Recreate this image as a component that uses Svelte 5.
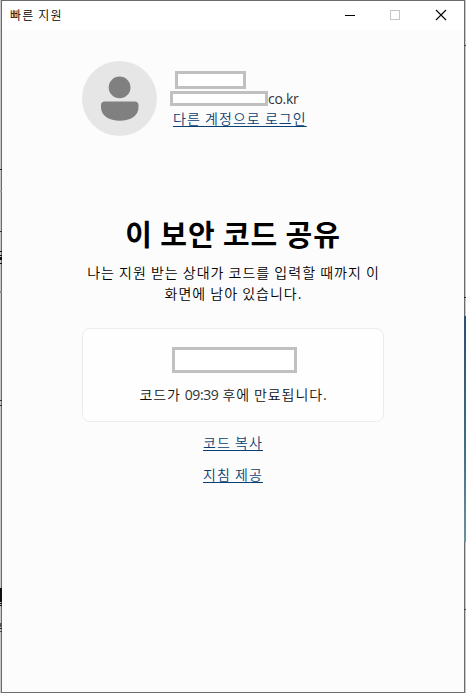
<script>
  const edgeMarks = [
    { top: 169, h: 1, c: '#222' }, { top: 191, h: 1, c: '#999' }, { top: 231, h: 1, c: '#333' },
    { top: 251, h: 1, c: '#111' }, { top: 255, h: 1, c: '#111' }, { top: 257, h: 2, c: '#111' },
    { top: 259, h: 1, c: '#111' }, { top: 263, h: 1, c: '#111' }, { top: 291, h: 2, c: '#888' },
    { top: 400, h: 1, c: '#333' }, { top: 405, h: 1, c: '#333' }, { top: 588, h: 14, c: '#111' },
    { top: 603, h: 1, c: '#111' }, { top: 605, h: 1, c: '#111' }, { top: 623, h: 4, c: '#555' },
    { top: 628, h: 1, c: '#222' }, { top: 631, h: 1, c: '#444' }
  ];
  const rightMarks = [
    { top: 45, h: 1, c: '#444' }, { top: 297, h: 1, c: '#222' }, { top: 609, h: 1, c: '#444' }
  ];
</script>

<div class="desktop">
  {#each edgeMarks as m}
    <i class="mark left" style="top:{m.top}px;height:{m.h}px;background:{m.c}"></i>
  {/each}
  {#each rightMarks as m}
    <i class="mark right" style="top:{m.top}px;height:{m.h}px;background:{m.c}"></i>
  {/each}
  <i class="panel"></i>
  <div class="window">
    <header>
      <span class="title">빠른 지원</span>
      <div class="controls">
        <svg width="46" height="29" viewBox="0 0 46 29" shape-rendering="crispEdges"><path d="M18 14.5h10" stroke="#000" /></svg>
        <svg width="45" height="29" viewBox="0 0 45 29" shape-rendering="crispEdges"><rect x="17.5" y="9.5" width="9" height="9" fill="none" stroke="#c6c6c6" /></svg>
        <svg width="46" height="29" viewBox="0 0 46 29"><path d="M18 9l10 10M28 9l-10 10" stroke="#000" stroke-width="1.1" /></svg>
      </div>
    </header>
    <main>
      <section class="account">
        <svg class="avatar" width="75" height="75" viewBox="0 0 75 75">
          <circle cx="37.5" cy="37.5" r="37.5" fill="#e6e6e6" />
          <circle cx="37.6" cy="26.4" r="10.9" fill="#808080" />
          <path d="M23 40.5h29.500a4 4 0 0 1 4 4v2c0 8-8 13.300-18.700 13.300S19 54.500 19 46.500v-2a4 4 0 0 1 4-4z" fill="#808080" />
        </svg>
        <div class="who">
          <div class="mask name"></div>
          <div class="mail"><div class="mask address"></div><span>co.kr</span></div>
          <a class="link login" href="#login">다른 계정으로 로그인</a>
        </div>
      </section>
      <h1>이 보안 코드 공유</h1>
      <p class="desc">나는 지원 받는 상대가 코드를 입력할 때까지 이<br />화면에 남아 있습니다.</p>
      <section class="card">
        <div class="mask code"></div>
        <p class="expires">코드가 <span>09:39</span> 후에 만료됩니다.</p>
      </section>
      <a class="link copy" href="#copy">코드 복사</a>
      <a class="link guide" href="#guide">지침 제공</a>
    </main>
  </div>
</div>

<style>
  :global(body) { margin: 0; overflow: hidden; }
  .desktop {
    position: relative; box-sizing: border-box; width: 466px; height: 693px; padding: 0 1px;
    background: #c8c8c8; font-family: "Noto Sans CJK KR", sans-serif; font-size: 14px;
  }
  .mark { position: absolute; width: 2px; z-index: 1; }
  .left { left: 0; }
  .right { right: 0; }
  .panel {
    position: absolute; z-index: 1; right: 0; top: 316px; width: 2px; height: 226px;
    background: linear-gradient(#2d4f72, #3f6c87 55%, #6a929b);
  }
  .window {
    box-sizing: border-box; width: 464px; height: 693px; border: 1px solid #6b6b6d;
    background: #fcfcfc; display: flex; flex-direction: column;
  }
  header { height: 29px; background: #fff; display: flex; justify-content: space-between; }
  .title { padding-left: 8px; font-size: 12px; line-height: 28px; letter-spacing: 1.2px; color: #000; font-weight: 350; }
  .controls { display: flex; }
  svg { display: block; flex: none; }
  main { display: flex; flex-direction: column; align-items: center; }
  .account { align-self: flex-start; display: flex; margin: 31px 0 0 80px; height: 75px; }
  .who { display: flex; flex-direction: column; align-items: flex-start; padding: 10px 0 0 13px; }
  .mask { box-sizing: border-box; border: 3px solid #c0c0c0; background: #fff; flex: none; }
  .name { width: 71px; height: 18px; margin-left: 5px; }
  .mail { display: flex; margin-top: 2px; height: 15px; }
  .address { width: 98px; height: 15px; }
  .mail span { font: 14px/16px "Open Sans", sans-serif; letter-spacing: -.3px; color: #333; }
  .link { color: #0b3f74; font-weight: 350; line-height: 20px; letter-spacing: 1.05px; text-decoration: underline; text-underline-offset: 2px; text-decoration-thickness: 1px; white-space: nowrap; }
  .login { margin: 2px 0 0 3px; }
  h1 { margin: 76px 0 0; height: 42px; font-size: 29px; line-height: 42px; font-weight: 700; letter-spacing: .9px; white-space: nowrap; color: #000; }
  .desc { margin: 8px 0 0 1px; text-align: center; line-height: 21px; letter-spacing: 1px; white-space: nowrap; color: #000; font-weight: 350; }
  .card {
    box-sizing: border-box; width: 302px; height: 94px; margin-top: 24px; padding-top: 18px;
    border: 1px solid #ececec; border-radius: 8px; background: #fefefe;
    display: flex; flex-direction: column; align-items: center;
  }
  .code { width: 125px; height: 26px; margin-left: 2px; }
  .expires { margin: 11px 0 0 1px; line-height: 20px; letter-spacing: .9px; white-space: nowrap; color: #111; font-weight: 350; }
  .expires span { font-family: "Open Sans", sans-serif; letter-spacing: -.4px; font-weight: 400; color: #333; }
  .copy { margin-top: 10px; }
  .guide { margin-top: 12px; }
</style>
